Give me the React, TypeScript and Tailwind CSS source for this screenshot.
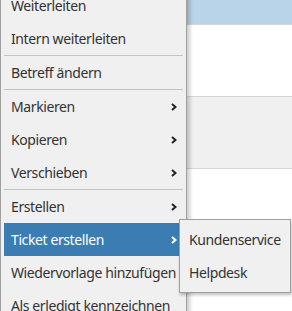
const items: Array<{ label: string; sub?: boolean; active?: boolean; sepBefore?: boolean }> = [
  { label: 'Weiterleiten' },
  { label: 'Intern weiterleiten' },
  { label: 'Betreff ändern', sepBefore: true },
  { label: 'Markieren', sub: true, sepBefore: true },
  { label: 'Kopieren', sub: true },
  { label: 'Verschieben', sub: true },
  { label: 'Erstellen', sub: true, sepBefore: true },
  { label: 'Ticket erstellen', sub: true, active: true },
  { label: 'Wiedervorlage hinzufügen' },
  { label: 'Als erledigt kennzeichnen' },
];

function Chevron({ white }: { white?: boolean }) {
  return (
    <svg width="6" height="8" viewBox="0 0 6 8" className="shrink-0">
      <polyline points="1,1 4.5,4 1,7" fill="none" stroke={white ? '#ffffff' : '#222222'} strokeWidth="2" />
    </svg>
  );
}

export default function App() {
  return (
    <div className="relative h-[311px] w-[292px] overflow-hidden bg-white font-['Noto_Sans',sans-serif] text-[14px] tracking-[-0.4px]">
      <div className="flex flex-col">
        <div className="h-[24px] bg-[#b9d4e8]" />
        <div className="h-px bg-[#d6d6d6]" />
        <div className="h-[71px] bg-white" />
        <div className="h-px bg-[#d6d6d6]" />
        <div className="h-[71px] bg-[#f0f0f0]" />
        <div className="h-px bg-[#d6d6d6]" />
        <div className="h-[150px] bg-white" />
      </div>

      <div className="absolute left-0 top-[-11px] w-[187px] border-x border-[#a0a0a0] bg-[#f0f0f0] px-[3px] shadow-[3px_0_4px_rgba(0,0,0,0.2)]">
        {items.map((it) => (
          <div key={it.label}>
            {it.sepBefore && <div className="h-px bg-[#c4c4c4]" />}
            <div
              className={`flex h-[33px] items-center justify-between pl-[7px] pr-[6px] whitespace-nowrap ${
                it.active ? 'bg-[#3b7db3] text-white' : 'text-[#333333]'
              }`}
            >
              <span>{it.label}</span>
              {it.sub && <Chevron white={it.active} />}
            </div>
          </div>
        ))}
      </div>

      <div className="absolute left-[179px] top-[219px] w-[112px] border border-[#a0a0a0] bg-[#f0f0f0] py-[3px] text-[#333333] shadow-[1px_2px_3px_rgba(0,0,0,0.25)]">
        <div className="flex h-[33px] items-center pl-[9px] whitespace-nowrap">Kundenservice</div>
        <div className="flex h-[33px] items-center pl-[9px] whitespace-nowrap">Helpdesk</div>
      </div>
    </div>
  );
}
